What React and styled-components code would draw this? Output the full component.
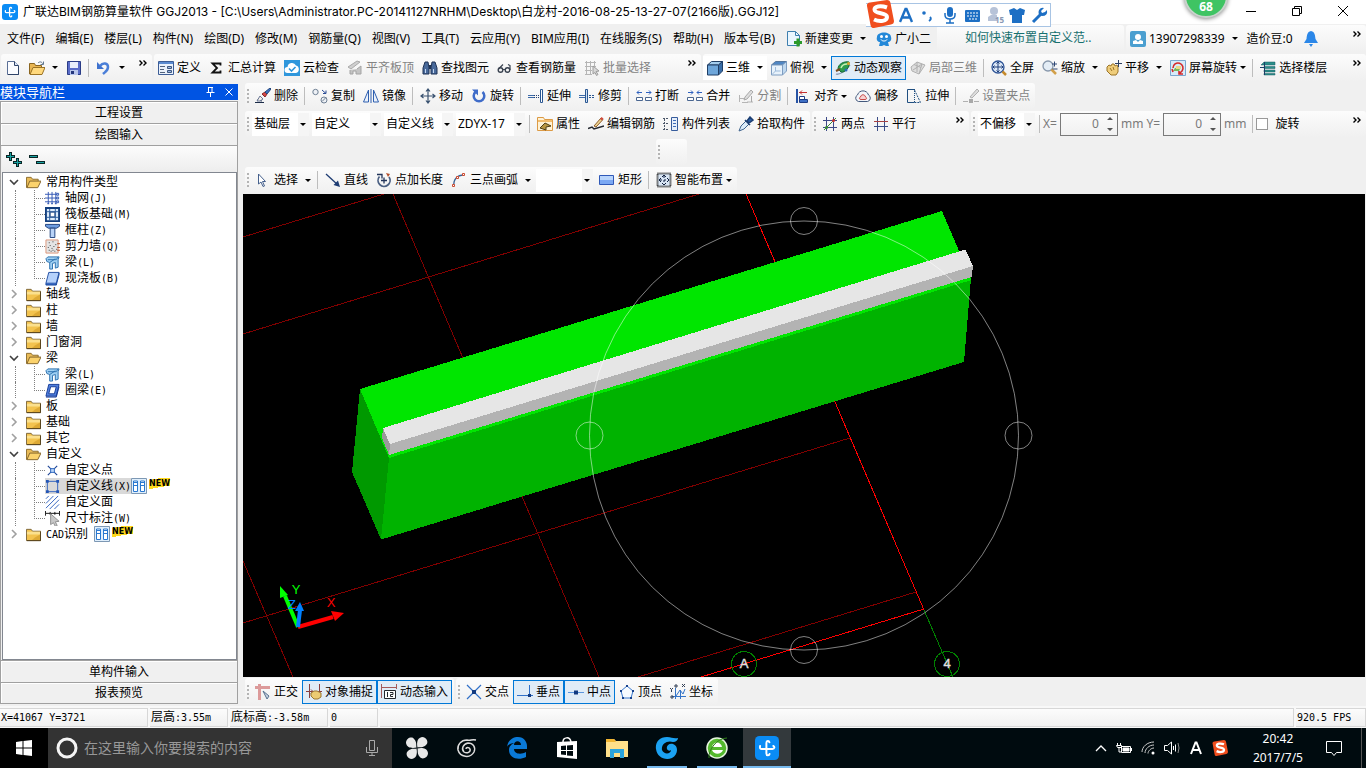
import React, { useState } from "react";
import styled, { createGlobalStyle } from "styled-components";

const GlobalStyle = createGlobalStyle`
  * {
    box-sizing: border-box;
  }

  body {
    margin: 0;
    background: #f0f0f0;
    color: #000;
    font-family: "Noto Sans", "Noto Sans CJK SC", sans-serif;
    font-size: 12px;
    line-height: 16px;
    overflow: hidden;
  }

  button, input, select {
    font: inherit;
    color: inherit;
  }
`;

// ---------- icons ----------

const IconSvg = styled.svg`
  flex: none;
`;

const Svg = ({ size = 16, children }) => (
  <IconSvg width={size} height={size} viewBox="0 0 16 16" fill="none" aria-hidden="true">
    {children}
  </IconSvg>
);

const Logo = ({ size }) => (
  <Svg size={size}>
    <rect width="16" height="16" rx="3" fill="#0a8cf5" />
    <path
      d="M9.6 4.2C9.3 3 7.6 3 7.6 4.6v7c0 1.6 1.8 1.6 2.1.4M3.4 6.6C3 9 4 8.6 5 8.6h6.6c1.6 0 1.6-1.6.6-2"
      stroke="#fff"
      strokeWidth="1.3"
      strokeLinecap="round"
    />
  </Svg>
);

const icons = {
  newDoc: (
    <>
      <path d="M2.5 1.5h7l4 4v9h-11z" fill="#fbfcff" stroke="#5a6f96" />
      <path d="M9.5 1.5v4h4" fill="#dce6f7" stroke="#2f4368" />
      <path d="M13.5 6v8.5H3" stroke="#2f4368" />
    </>
  ),
  open: (
    <>
      <path d="M.5 14V3.5h5l1 2h6v2" fill="#e8b552" stroke="#8a6520" />
      <path d="M1 14.5l3-7h12l-3 7z" fill="#ffd97e" stroke="#9a7224" />
      <path d="M9 3c2-2 4-1 5 1M14.5 1.5v3h-3" stroke="#62788f" />
    </>
  ),
  save: (
    <>
      <path d="M1.5 1.5h13v13h-13z" fill="#5a6cc8" stroke="#2a3c86" />
      <path d="M4 2h8v6H4z" fill="#e9eefb" />
      <path d="M4 10h8v5H4z" fill="#b9c6ec" />
      <path d="M5 11h3v3H5z" fill="#24357c" />
    </>
  ),
  undo: (
    <>
      <path d="M1 2v7h7z" fill="#3f73cf" />
      <path d="M4 6c3-4 8-3 8 1s-3 5-5 7" stroke="#4b7fd8" strokeWidth="2.5" />
    </>
  ),
  define: (
    <>
      <path d="M.5 1.5h15v13H.5z" fill="#eaf1fb" stroke="#3c5d96" />
      <path d="M1 2h14v2H1z" fill="#5b8bd0" />
      <path d="M2 6.5h5M2 9.5h4M2 12.5h5" stroke="#51627c" />
      <path d="M9.5 6.5h4v2h-4zM9.5 10.5h4v2h-4z" fill="#9bb7e2" stroke="#3d567e" />
    </>
  ),
  sigma: <path d="M11.5 5.5v-2h-8L8 8l-4.5 4.5h8v-2" stroke="#111" strokeWidth="1.8" />,
  cloud: (
    <>
      <path d="M0 0h16v16H0z" fill="#2f97dc" />
      <path d="M3.5 13a3 3 0 010-6A4.5 4.5 0 0112 5.5 3.9 3.9 0 0112 13z" fill="#fff" />
      <path d="M5 8.5L7.5 11l4-4" stroke="#2f97dc" strokeWidth="1.6" />
    </>
  ),
  flatten: (
    <>
      <path d="M1 7l9-6 3 1-9 7z" fill="#cfcfcf" stroke="#aaa" />
      <path d="M3 10v4h3v-3h3v3h5V6l-4 3" fill="#c4c4c4" stroke="#a4a4a4" />
    </>
  ),
  find: (
    <>
      <path d="M3 2h3l1 6v6H1V8zM10 2h3l2 6v6H9V8z" fill="#48699a" stroke="#1e3254" />
      <path d="M7 5h2v4H7z" fill="#1e3254" />
      <path d="M3.5 9v4M11.5 9v4" stroke="#c4d6ef" />
    </>
  ),
  glasses: (
    <>
      <circle cx="3.5" cy="10" r="2.3" stroke="#3a4350" strokeWidth="1.4" />
      <circle cx="10.5" cy="10" r="2.3" stroke="#3a4350" strokeWidth="1.4" />
      <path d="M6 9.5h2M1.5 9L6 4.5M13 10V5.5l-2-1" stroke="#3a4350" strokeWidth="1.2" />
    </>
  ),
  batch: (
    <>
      <path
        d="M1 2.5h11M1 6.5h11M1 10.5h7M1 14.5h7M2.5 1v14M6.5 1v14M10.5 1v6"
        stroke="#b5b5b5"
      />
      <path d="M9 6l6 5-3 .5 2 3-1.5 1-1.5-3-2 1.5z" fill="#d8d8d8" stroke="#9b9b9b" />
    </>
  ),
  cube: (
    <>
      <path d="M.5 5l4-3.5h11L11.5 5z" fill="#a4cdee" stroke="#203f66" />
      <path d="M.5 5h11v10H.5z" fill="#6ea6da" stroke="#203f66" />
      <path d="M11.5 5l4-3.5V11l-4 4z" fill="#3a6ea8" stroke="#203f66" />
    </>
  ),
  topView: (
    <>
      <path d="M.5 5l4-3.5h11L11.5 5z" fill="#4f86c4" stroke="#56779d" />
      <path d="M.5 5h11v10H.5z" fill="#e8f2fb" stroke="#7d9cc0" />
      <path d="M11.5 5l4-3.5V11l-4 4z" fill="#bfd8ef" stroke="#7d9cc0" />
      <path d="M4.5 7v4h5M4.5 11L1 14.5" stroke="#9dbbdb" />
    </>
  ),
  orbit: (
    <>
      <path d="M1 14c2 1 10-2 14-9" stroke="#8a9ab5" strokeWidth="1.3" />
      <path d="M3 9c0-5 6-8 11-7 1 5-4 11-8 10z" fill="#2f9d4e" stroke="#136b33" />
      <path d="M6 8c1-3 4-4 6-4" stroke="#c9f0b5" strokeWidth="1.5" />
      <path d="M1 11l4-2" stroke="#7a4a1f" strokeWidth="2" />
      <circle cx="11" cy="10" r="1.5" fill="#2b6bb4" />
      <circle cx="13.5" cy="3.5" r="1.5" fill="#e2a52b" />
    </>
  ),
  local3d: (
    <>
      <path d="M1 7l6-5 8 3-6 9-7-3z" fill="#dedede" stroke="#b0b0b0" />
      <path d="M4 4.5l7 3M7 2v10M3 10l9-6M12 4L9 14" stroke="#b0b0b0" />
    </>
  ),
  fit: (
    <>
      <circle cx="7" cy="7" r="6" fill="#dfeaf8" stroke="#2f5597" strokeWidth="1.3" />
      <path
        d="M7 2v10M2 7h10M5.5 3.5L7 2l1.5 1.5M5.5 10.5L7 12l1.5-1.5M3.5 5.5L2 7l1.5 1.5M10.5 5.5L12 7l-1.5 1.5"
        stroke="#1f3f7a"
      />
      <path d="M11.5 11.5L15 15" stroke="#c58a2c" strokeWidth="2.5" />
    </>
  ),
  zoom: (
    <>
      <circle cx="6" cy="6" r="5" fill="#e4edf6" stroke="#8898ac" strokeWidth="1.3" />
      <path d="M9.5 9.5L14 14" stroke="#d2a04a" strokeWidth="2.5" />
      <path d="M10 4h5M12.5 1.5v5M10.5 9h5" stroke="#2e4775" />
    </>
  ),
  pan: (
    <>
      <path
        d="M1 7l2-2 2 1 1-2h2l1 2 2-1 1 2v5l-2 3H5l-4-4z"
        fill="#efcd7b"
        stroke="#9b7428"
      />
      <path d="M4 8l2 3M7 7l1 3" stroke="#9b7428" />
      <path d="M12.5 0v7M9 3.5h7" stroke="#2d3f63" />
    </>
  ),
  rotateView: (
    <>
      <path d="M.5.5h15v15H.5z" fill="#d7ebf9" stroke="#7aa7cf" />
      <path d="M5 8l6-1-2 4H3z" fill="#79b85a" />
      <path d="M6 6h5v3H6z" fill="#e9d88a" />
      <path d="M3 8a5 5 0 119 3l-3 3M9 11v3h4M3 12l-1-3" stroke="#d62a2a" strokeWidth="1.6" />
    </>
  ),
  floors: (
    <>
      <path
        d="M1 5l3-3h11v3zM4 6.5h11v2H4zM4 10h11v2H4zM4 13.5h11V15H4z"
        fill="#2a8f8a"
        stroke="#1c5c66"
        strokeWidth=".5"
      />
      <path d="M0 7.5h4M4.5 2v13" stroke="#1c3e66" />
    </>
  ),
  erase: (
    <>
      <path d="M0 14.5h9M2 12l5 1" stroke="#1c2c48" />
      <path d="M5 8l3 3-3 2H2z" fill="#f4f0ea" stroke="#6b7896" />
      <path d="M7 6l3 3 2-3-2-2z" fill="#d34848" stroke="#8a2727" />
      <path d="M10 4l2 2 4-5-1-1z" fill="#3d73c4" stroke="#24467c" />
    </>
  ),
  copy: (
    <>
      <circle cx="3.5" cy="4" r="2.7" fill="#eef1f6" stroke="#6f8094" />
      <circle cx="12" cy="12" r="3" fill="#eef1f6" stroke="#6f8094" />
      <path d="M10 13.5l4-4" stroke="#6f8094" />
      <path d="M10 2l4 3.5M14 2.5v3h-3" stroke="#2b4c96" />
    </>
  ),
  mirror: (
    <>
      <path d="M5.5 2v12h-5zM10.5 2v12h5z" fill="#eaf1fb" stroke="#3060b0" />
      <path d="M8 1v14" stroke="#3060b0" />
    </>
  ),
  move: (
    <path
      d="M8 1v14M1 8h14M6 3.5L8 1l2 2.5M6 12.5L8 15l2-2.5M3.5 6L1 8l2.5 2M12.5 6L15 8l-2.5 2"
      stroke="#3a5270"
      strokeWidth="1.2"
    />
  ),
  rotate: (
    <>
      <path d="M4.5 4a5.3 5.3 0 107 0" stroke="#3f6cc9" strokeWidth="2.5" />
      <path d="M1 1.5h6v6z" fill="#3f6cc9" />
    </>
  ),
  extend: (
    <>
      <path d="M0 7.5h6M0 9.5h6" stroke="#3c6aa8" />
      <path d="M6 7.5h5M6 9.5h5" stroke="#223f70" strokeDasharray="1 1" />
      <path d="M12.5 1.5h2v13h-2z" fill="#fff" stroke="#2a5792" />
    </>
  ),
  trim: (
    <>
      <path d="M0 7.5h6M0 9.5h6" stroke="#3c6aa8" />
      <path d="M6.5 1.5h2v13h-2z" fill="#cfe0f4" stroke="#2a5792" />
      <path d="M10 7.5h5M10 9.5h5" stroke="#2a5792" strokeDasharray="2 1" />
    </>
  ),
  breakIt: (
    <>
      <path d="M.5 9.5h6v3h-6zM9.5 9.5h6v3h-6z" fill="#fff" stroke="#4a6690" />
      <path d="M1 4.5h5M10 4.5h5M3 2.5l-2 2 2 2M13 2.5l2 2-2 2" stroke="#2f62c0" />
    </>
  ),
  merge: (
    <>
      <path d="M.5 9.5h6v3h-6zM9.5 9.5h6v3h-6z" fill="#fff" stroke="#4a6690" />
      <path d="M1 4.5h5M10 4.5h5M4 2.5l2 2-2 2M12 2.5l-2 2 2 2" stroke="#2f62c0" />
    </>
  ),
  split: (
    <>
      <path d="M1.5 7v7M1 10.5h8M9 14h6M4 14.5h6" stroke="#b5b5b5" />
      <path d="M6 12l1-3 6-7 2 2-6 7zM13.5 8v6" fill="#ddd" stroke="#a9a9a9" />
    </>
  ),
  align: (
    <>
      <path d="M2 1v14" stroke="#2753a4" strokeWidth="2" />
      <path d="M4 4.5h8M7 2.5l-2 2 2 2" stroke="#c63131" />
      <path d="M4.5 8.5h5v3h-5zM4.5 11.5h8v3h-8z" fill="#fff" stroke="#1e3d85" />
      <path d="M5 12h7v2H5z" fill="#3f6fc4" />
    </>
  ),
  offset: (
    <>
      <path
        d="M3.5 13.5a3.5 3.5 0 01-1-6.5C4 1.5 12 1.5 13.5 7a3.5 3.5 0 01-1 6.5z"
        fill="#f3f5f9"
        stroke="#44597c"
      />
      <path
        d="M6 11.5c-2 0-2-2-.5-2.5.5-3 4.5-3 5 0 1.5.5 1.5 2.5-.5 2.5z"
        fill="#f6d2d2"
        stroke="#c64848"
      />
    </>
  ),
  stretch: (
    <>
      <path d="M9 1.5H1.5v13h7" stroke="#204f80" />
      <path d="M8.5 2l6 12.5h-6" stroke="#204f80" strokeDasharray="2 1" />
      <path d="M8.5 3v11" stroke="#204f80" strokeDasharray="1 1" />
    </>
  ),
  grip: (
    <>
      <path d="M0 13.5h5M11 13.5h5" stroke="#b0b0b0" />
      <path d="M6 11h4v4H6z" fill="#a9a9a9" />
      <path d="M7 9l7-8 2 2-7 7z" fill="#ddd" stroke="#b0b0b0" />
    </>
  ),
  props: (
    <>
      <path d="M.5 1.5h6l1 2h8v11H.5z" fill="#fff2d5" stroke="#dc9a45" />
      <path d="M1 4h14v2H1z" fill="#f2bd6e" />
      <path d="M3 12l5-5 6 3-5 1v3z" fill="#b79541" stroke="#4c3d16" />
    </>
  ),
  editBar: (
    <>
      <path d="M0 12.5L4 11l2 2 10-3" stroke="#23272e" strokeWidth="1.5" />
      <path d="M6 10l7-8 2 1.5L8 11z" fill="#efd592" stroke="#8b5b2a" />
      <path d="M12 3l2 1.5 1.5-2-2-1.5z" fill="#d14c3f" />
    </>
  ),
  list: (
    <>
      <path d="M0 2.5h6M0 7.5h6M0 13.5h6M1.5 3v11" stroke="#4b5668" strokeDasharray="2 1" />
      <path d="M8.5 1.5h6v13h-6z" fill="#e7effa" stroke="#365c9c" />
      <path d="M10 4.5h3M10 7.5h3M10 10.5h3" stroke="#3d6bb7" />
    </>
  ),
  picker: (
    <>
      <path d="M1 15l2-5 5-5 3 3-5 5z" fill="#dcecf9" stroke="#41658e" />
      <path d="M7 4l5 5M9 5l3-4 3 3-4 3z" fill="#2c5fa5" stroke="#1c3e72" strokeWidth="1.5" />
    </>
  ),
  twoPoint: (
    <>
      <path d="M4.5 1v14M11.5 1v14M1 4.5h14M1 11.5h14" stroke="#3d4a88" />
      <path d="M2 14L14 2" stroke="#3a8a3a" />
      <circle cx="4.5" cy="11.5" r="1.5" fill="#3a8a3a" />
      <circle cx="11.5" cy="4.5" r="1.5" fill="#c33" />
    </>
  ),
  parallel: (
    <>
      <path d="M4.5 1v14M11.5 1v14" stroke="#3b4c86" />
      <path d="M1 5.5h14" stroke="#a74141" />
      <path d="M1 10.5h14" stroke="#3b4c86" />
    </>
  ),
  pointer: (
    <path d="M3.5 2v10L6 10l2 4.5 1.5-.5-2-4.5h3z" fill="#fff" stroke="#46618d" />
  ),
  line: (
    <>
      <path d="M1 2l12 11" stroke="#1e3c73" strokeWidth="1.3" />
      <path d="M15 15l-6.5-2L13 8.5z" fill="#1e3c73" />
    </>
  ),
  pointLen: (
    <>
      <path d="M3.5 4.5A6 6 0 1013 5" stroke="#4a5f82" strokeWidth="1.8" />
      <path d="M1 2.5h5v4M8 5.5v6M5 8.5h6" stroke="#22345a" strokeWidth="1.3" />
      <path d="M10 1l4 1-2 3z" fill="#b5502c" />
    </>
  ),
  arc: (
    <>
      <path d="M3 14C2 8 6 3 13 3" stroke="#3b6394" strokeWidth="1.3" />
      <path
        d="M1.5 12.5h2v2h-2zM5.5 4.5h2v2h-2zM11.5 1.5h2v2h-2z"
        fill="#fff"
        stroke="#cc4a30"
      />
    </>
  ),
  rect: (
    <>
      <path d="M.5 3.5h14v9H.5z" fill="#b9d5fc" stroke="#3059b8" />
      <path d="M1 8h13v4H1z" fill="#7ba8f3" />
    </>
  ),
  smart: (
    <>
      <path
        d="M1.5 1.5h13v13h-13z"
        fill="#d9e6f5"
        stroke="#111"
        strokeWidth="2"
        strokeDasharray="1 1"
      />
      <path d="M8 4v8M4 8h8" stroke="#102040" strokeDasharray="2 2" />
      <path d="M6 5l2-2 2 2M6 11l2 2 2-2M5 6L3 8l2 2M11 6l2 2-2 2" stroke="#102040" />
    </>
  ),
  ortho: (
    <>
      <path d="M0 2h15v3H0zM3 0h3v16H3z" fill="#dc9a9a" />
      <path d="M8 7l6 5-2 3z" fill="#c9d4e2" stroke="#56708f" />
    </>
  ),
  snap: (
    <>
      <path d="M3.5 0v14M13.5 0v7" stroke="#8a4040" />
      <path d="M0 7.5h7M5 5.5l2 2-2 2M16 7.5h-4" stroke="#8a4040" />
      <path d="M5 9l3-2h3l4 2v4l-3 2H8l-3-3z" fill="#eccb72" stroke="#9b7630" />
    </>
  ),
  dynInput: (
    <>
      <path d="M.5 0v14M15.5 0v5M0 3.5h15" stroke="#a45b5b" />
      <path d="M3.5 6.5h11v8h-11z" fill="#fff" stroke="#23272e" />
      <path d="M6.5 8v5M9 8.5h3v2H9.5v2H12" stroke="#23272e" />
    </>
  ),
  cross: (
    <>
      <path d="M1 1l14 14M15 1L1 15" stroke="#3070c8" strokeWidth="1.2" />
      <path d="M6 6h4v4H6z" fill="#123a80" />
    </>
  ),
  perp: (
    <>
      <path d="M0 11.5h16M12.5 1v11" stroke="#3070c8" />
      <path d="M11 10h3v3h-3z" fill="#123a80" />
    </>
  ),
  mid: (
    <>
      <path d="M0 8.5h16" stroke="#5b95dc" />
      <path d="M6 6.5h4v4H6z" fill="#123a80" />
    </>
  ),
  vertex: (
    <>
      <path d="M8 2l6 5-2 7H4L2 7z" stroke="#3a7ad0" fill="#f7fbff" />
      <path
        d="M7 1h2v2H7zM1 6h2v2H1zM13 6h2v2h-2zM3 13h2v2H3zM11 13h2v2h-2z"
        fill="#17428d"
      />
    </>
  ),
  coord: (
    <>
      <path d="M5.5 4v11M2 12.5h14M6 12l4-6 3 4 2-5M10.5 6v9" stroke="#3474c8" />
      <path
        d="M0 4l1.5 1.5L3 4M1.5 5.5V8M5 1h2v2H5zM12 0l3 3M15 0l-3 3M1 12h2v2H1z"
        stroke="#333f55"
      />
    </>
  ),
  change: (
    <>
      <path d="M1.5.5h8l4 4v10h-12z" fill="#eaf6ff" stroke="#3e7fae" />
      <path d="M9.5.5v4h4" stroke="#3e7fae" />
      <path d="M8 11.5h8M12 7.500v8" stroke="#2b9a2b" strokeWidth="3" />
    </>
  ),
  mascot: (
    <>
      <path
        d="M1 6c0-6 14-6 14 0 1 3-1 5-3 5l1 4h-3l-2-1-2 1H3l1-4C2 11 0 9 1 6z"
        fill="#2388d8"
      />
      <circle cx="5.5" cy="5.5" r="1.5" fill="#fff" />
      <circle cx="10.5" cy="5.5" r="1.5" fill="#fff" />
      <path d="M5 8.5c1 2 5 2 6 0" stroke="#fff" />
    </>
  ),
  user: (
    <>
      <rect width="16" height="16" rx="2" fill="#4b9fd0" />
      <circle cx="8" cy="6" r="3" fill="#fff" />
      <path d="M3 13v-3l3-1 2 2 2-2 3 1v3z" fill="#fff" />
    </>
  ),
  bell: (
    <>
      <path d="M8 0c4 1 4 4 4.5 8l2.5 4H1l2.500-4C4 4 4 1 8 0z" fill="#2b87e8" />
      <path d="M6 13h4l-2 3z" fill="#2b87e8" />
    </>
  ),
  folder: (
    <>
      <path d="M.5 14.5v-12h5l1.5 2h8.5v10z" fill="#f3c34f" stroke="#7b6437" />
      <path d="M1 5h14v3H1z" fill="#fbe08e" />
      <path d="M10 11l5-3v6H6z" fill="#dda935" />
      <path d="M15.5 5v9.5H1" stroke="#54401a" />
    </>
  ),
  folderOpen: (
    <>
      <path d="M.5 13.5v-11h5l1.5 2h6v2" fill="#e9bb58" stroke="#8a6b2c" />
      <path d="M1 13.5l3-7h12l-3.5 7z" fill="#fbd26c" stroke="#80622a" />
    </>
  ),
  grid: (
    <>
      <path d="M3.5 1v13M7.5 1v13M11.5 1v13M0 3.5h13M0 7.5h13M0 11.5h13" stroke="#3156b4" />
      <path
        d="M12.5 2.5h2v2h-2zM12.5 6.5h2v2h-2zM12.5 10.5h2v2h-2zM2.5 13.5h2M6.5 13.5h2M10.5 13.5h2"
        stroke="#3156b4"
      />
    </>
  ),
  raft: (
    <>
      <path d="M1 1h14v14H1z" fill="#dcebfb" stroke="#123e7e" strokeWidth="2" />
      <path d="M5 2v12M11 2v12M2 5h12M2 11h12" stroke="#2a5d9e" />
      <path d="M5.5 5.5h5v5h-5z" fill="#fff" stroke="#123e7e" />
    </>
  ),
  column: (
    <>
      <path d="M.5 1.5h15v2l-3 2h-9l-3-2z" fill="#6d9ce0" stroke="#1d3f7c" />
      <path d="M5.5 5.5h5v10h-5z" fill="#b9d3f7" stroke="#1d3f7c" />
    </>
  ),
  wall: (
    <>
      <path d="M1 1h13v14H1z" fill="#e4e4e4" stroke="#dc9478" />
      <path
        d="M4 4h1M8 3h1M11 6h1M5 7h1M9 8h1M3 9h1M7 10h1M4 12h1M8 12h1M12 11h1M6 13h1M10 13h1"
        stroke="#333"
      />
      <path d="M13 5h3M13 9h3M13 12h3" stroke="#b0471f" />
    </>
  ),
  beam: (
    <>
      <path d="M1 4l2-2h12l-1 3v8l-3 1V8L8 9v6H5V8L2 7z" fill="#9fd0f3" stroke="#2a6fae" />
      <path d="M3 5h9M12 5l2-3M5 8l6-4" stroke="#2a6fae" />
    </>
  ),
  slab: (
    <>
      <path d="M4 1.5h11L12 13H1z" fill="#b5d1fb" stroke="#1f4ca0" />
      <path d="M1 13v2h11v-2M12 15l3-11V2" fill="#2e60be" stroke="#1f4ca0" />
    </>
  ),
  ring: (
    <>
      <path
        d="M4 1.5h11L12 14H1zM6 4L4 11.5h6L12 4z"
        fill="#4f7fdc"
        fillRule="evenodd"
        stroke="#143a96"
      />
      <path d="M1 15h11l3-11" stroke="#143a96" />
    </>
  ),
  customPoint: (
    <>
      <path d="M3 3l10 10M13 3L3 13" stroke="#1e4596" strokeWidth="1.2" />
      <path d="M6 6h4v4H6z" fill="#bcd6f8" stroke="#2e68c0" />
    </>
  ),
  customLine: (
    <>
      <path d="M2.5 2.5h11v11h-11z" stroke="#2e60be" />
      <path d="M1 1h3v3H1zM12 1h3v3h-3zM1 12h3v3H1zM12 12h3v3h-3z" fill="#2456b6" />
    </>
  ),
  customFace: (
    <path d="M1 4l3-3M1 9l8-8M1 14L14 1M5 15L15 5M10 15l5-5" stroke="#2e60be" />
  ),
  dimension: (
    <>
      <path d="M.5 0v5M15.5 0v5M1 2.5h14M5.5 1v3M10.5 1v3" stroke="#111" />
      <path d="M6 3l9 8-4 .5 2 4-2 1-2-4-3 2z" fill="#c8c8c8" stroke="#8e8e8e" />
    </>
  ),
  book: (
    <>
      <path d="M.5.5h15v15H.5z" fill="#e0effc" stroke="#7d98b4" />
      <path d="M2.5 3v10.5h4V3zM9.5 3v10.5h4V3z" fill="#fff" stroke="#2a78d0" />
      <path d="M3 4.5h3M10 4.5h3M3 7.5h3M10 7.5h3" stroke="#2a78d0" />
    </>
  ),
  pin: <path d="M5.5 3v6M5 3.5h5M3.5 8.5h8M7.5 9v4M9 3v6" stroke="#fff" />,
};

const Icon = ({ name, size }) => <Svg size={size}>{icons[name]}</Svg>;

// ---------- shared pieces ----------

const Window = styled.div`
  display: flex;
  flex-direction: column;
  height: 100vh;
`;

const TitleBar = styled.header`
  display: flex;
  align-items: center;
  gap: 5px;
  height: 24px;
  padding-left: 2px;
  background: #fff;
  flex: none;

  h1 {
    margin: 0;
    font-family: Inter, "Noto Sans CJK SC", sans-serif;
    font-size: 12px;
    font-weight: 400;
    white-space: nowrap;
  }
`;

const WindowButtons = styled.div`
  display: flex;
  margin-left: auto;

  button {
    width: 46px;
    height: 22px;
    padding: 0;
    border: none;
    background: none;
  }
`;

const Band = styled.div`
  display: grid;
  grid-template-columns: ${(props) => props.$columns || "1fr"};
  gap: 2px;
  height: ${(props) => (props.$tall ? 29 : 28)}px;
  padding: 1px 0 1px ${(props) => props.$indent || 0}px;
  flex: none;
`;

const Group = styled.div`
  display: flex;
  align-items: center;
  min-width: 0;
  justify-self: ${(props) => (props.$fit ? "start" : "stretch")};
  padding-right: 1px;
  border-radius: 3px;
  background: linear-gradient(#fcfcfc, #f0f0f0);
`;

const GripDots = styled.span`
  width: 6px;
  height: 14px;
  flex: none;
  background: repeating-linear-gradient(#b4b4b4 0 2px, transparent 2px 4px) 2px 0 /
    2px 14px no-repeat;
`;

const Separator = styled.span`
  width: 6px;
  height: 18px;
  flex: none;
  background: linear-gradient(#bdbdbd, #bdbdbd) 2px 0 / 1px 100% no-repeat;
`;

const ToolButton = styled.button`
  display: flex;
  align-items: center;
  gap: 3px;
  height: 24px;
  padding: 0 3px;
  border: 1px solid ${(props) => (props.$active ? "#0078d7" : "transparent")};
  background: ${(props) =>
    props.$active ? "#e0ecf7" : props.$white ? "#fff" : "none"};
  white-space: nowrap;
  flex: none;

  &:disabled {
    color: #838383;
  }
`;

const Caret = styled.span`
  margin-left: ${(props) => (props.$split ? 4 : 0)}px;
  border: solid transparent;
  border-width: 3px 3px 0;
  border-top-color: #000;
  width: 5px;
  flex: none;
`;

const Tool = ({ icon, label, caret, split, ...rest }) => (
  <ToolButton type="button" aria-label={label || icon} {...rest}>
    <Icon name={icon} />
    {label}
    {(caret || split) && <Caret $split={split} />}
  </ToolButton>
);

const OverflowButton = styled.button`
  align-self: flex-start;
  width: 16px;
  height: 14px;
  margin-left: auto;
  padding: 0;
  border: none;
  background: none;
  flex: none;
`;

const Overflow = () => (
  <OverflowButton type="button" aria-label="更多">
    <svg width="8" height="6" viewBox="0 0 8 6" fill="none">
      <path d="M.5.5L3 3 .5 5.5M4.5.5L7 3 4.5 5.5" stroke="#000" strokeWidth="1.4" />
    </svg>
  </OverflowButton>
);

const ComboBox = styled.div`
  display: flex;
  align-items: center;
  width: ${(props) => (props.$wide ? 69 : 57)}px;
  height: 23px;
  margin: 0 2px 0 1px;
  background: linear-gradient(#f5f5f5, #f5f5f5) right / 11px 100% no-repeat #fff;
  flex: none;

  select {
    flex: 1;
    min-width: 0;
    padding: 0 0 0 2px;
    border: none;
    background: none;
    appearance: none;
    outline: none;
  }

  ${Caret} {
    margin-right: 3px;
  }
`;

const Combo = ({ label, value, wide }) => (
  <ComboBox $wide={wide}>
    <select aria-label={label} defaultValue={value}>
      <option>{value}</option>
    </select>
    <Caret />
  </ComboBox>
);

// ---------- menu ----------

const MenuBar = styled.nav`
  display: flex;
  align-items: center;
  gap: 11px;
  padding-left: 7px;

  > button {
    padding: 0;
    border: none;
    background: none;
    white-space: nowrap;
  }
`;

const MenuTools = styled.div`
  display: flex;
  gap: 2px;
  margin-left: -4px;
`;

const Tip = styled.a`
  padding: 5px 0 0 28px;
  border-radius: 3px;
  background: linear-gradient(#fcfcfc, #f0f0f0);
  color: #17706f;
  text-decoration: none;
  white-space: nowrap;
`;

const Bean = styled.span`
  margin: 0 6px 0 5px;
`;

const menus = [
  "文件(F)",
  "编辑(E)",
  "楼层(L)",
  "构件(N)",
  "绘图(D)",
  "修改(M)",
  "钢筋量(Q)",
  "视图(V)",
  "工具(T)",
  "云应用(Y)",
  "BIM应用(I)",
  "在线服务(S)",
  "帮助(H)",
  "版本号(B)",
];

const Menu = () => (
  <Band $tall $columns="935px 187px 1fr">
    <MenuBar>
      {menus.map((menu) => (
        <button type="button" key={menu}>
          {menu}
        </button>
      ))}
      <MenuTools>
        <Tool icon="change" label="新建变更" split />
        <Tool icon="mascot" label="广小二" />
      </MenuTools>
    </MenuBar>
    <Tip href="#tip">如何快速布置自定义范..</Tip>
    <Group>
      <Tool icon="user" label="13907298339" split />
      <Bean>造价豆:0</Bean>
      <Tool icon="bell" />
      <Overflow />
    </Group>
  </Band>
);

// ---------- floating input method bar and speed ball ----------

const ImeBar = styled.div`
  position: absolute;
  top: 3px;
  left: 866px;
  display: flex;
  align-items: center;
  justify-content: flex-end;
  width: 185px;
  height: 24px;
  padding-right: 1px;
  border: 1px solid #a8c4e4;
  border-left: none;
  background: #fff;
`;

const ImeLogo = styled.span`
  position: absolute;
  left: 0;
  top: -4px;
`;

const SogouLogo = ({ size }) => (
  <IconSvg width={size} height={size} viewBox="0 0 28 28" fill="none">
    <path
      d="M1 6Q.5 3 4 2.5L21 0q3 0 3.5 3L28 21q0 3-3 3.5L8 28q-3 .5-3.5-3z"
      fill="#f04e1e"
    />
    <path
      d="M21 7.5C14 5 8.5 6.5 8.5 9.5c0 5 12.5 2.5 12.5 7.5 0 4-7 5.5-13 2.500"
      stroke="#fff"
      strokeWidth="4"
    />
  </IconSvg>
);

const SpeedBall = styled.div`
  position: absolute;
  top: -26px;
  left: 1184px;
  width: 44px;
  height: 44px;
  padding-top: 23px;
  border: 2px solid #c9d3cc;
  border-radius: 50%;
  background: #3fc463;
  box-shadow: 0 1px 4px #888;
  color: #fff;
  font-weight: 700;
  text-align: center;
`;

const Ime = () => (
  <ImeBar>
    <ImeLogo>
      <SogouLogo size={28} />
    </ImeLogo>
    <svg width="150" height="20" viewBox="0 0 150 20" fill="none">
      <path d="M1 17L6.5 4h1L13 17M3.5 12.5h7" stroke="#1d6fc4" strokeWidth="2.4" />
      <circle cx="25" cy="8" r="1.8" fill="#1d6fc4" />
      <path d="M31 12q2 2-1 4" stroke="#1d6fc4" strokeWidth="2" />
      <rect x="48" y="2" width="6" height="10" rx="3" fill="#1d6fc4" />
      <path
        d="M46 8v2q0 4 5 4t5-4V8M51 14v4M47 18h8"
        stroke="#1d6fc4"
        strokeWidth="1.5"
      />
      <rect x="66" y="5" width="15" height="12" rx="1" fill="#1d6fc4" />
      <path
        d="M68 8h12M68 11h12M70 14h8"
        stroke="#fff"
        strokeWidth="1.2"
        strokeDasharray="2 1"
      />
      <circle cx="95" cy="6" r="4" fill="#b7c3d8" />
      <path d="M89 16v-4l3-2h6v6z" fill="#b7c3d8" />
      <text x="96" y="18" fontSize="8" fontWeight="700" fill="#8797b3">
        15
      </text>
      <path d="M110 5l5-2 3 2 3-2 5 2-1 5h-2v8h-10v-8h-2z" fill="#1d6fc4" />
      <path d="M134 17l8-8" stroke="#1d6fc4" strokeWidth="3" />
      <path d="M145 3l-3 3 1 2 3-1 2-2q1 6-5 6-5-1-3-6 2-3 5-2z" fill="#1d6fc4" />
    </svg>
  </ImeBar>
);

// ---------- toolbars ----------

const MainTools = () => (
  <Band $tall $columns="151px 547px 1fr" $indent={1}>
    <Group>
      <Tool icon="newDoc" />
      <Tool icon="open" split />
      <Tool icon="save" />
      <Separator />
      <Tool icon="undo" split />
      <Overflow />
    </Group>
    <Group>
      <Tool icon="define" label="定义" />
      <Tool icon="sigma" label="汇总计算" />
      <Tool icon="cloud" label="云检查" />
      <Tool icon="flatten" label="平齐板顶" disabled />
      <Tool icon="find" label="查找图元" />
      <Tool icon="glasses" label="查看钢筋量" />
      <Tool icon="batch" label="批量选择" disabled />
      <Overflow />
    </Group>
    <Group>
      <Tool icon="cube" label="三维" split $white />
      <Tool icon="topView" label="俯视" split />
      <Tool icon="orbit" label="动态观察" $active />
      <Tool icon="local3d" label="局部三维" disabled />
      <Separator />
      <Tool icon="fit" label="全屏" />
      <Tool icon="zoom" label="缩放" split />
      <Tool icon="pan" label="平移" split />
      <Tool icon="rotateView" label="屏幕旋转" caret />
      <Separator />
      <Tool icon="floors" label="选择楼层" />
      <Overflow />
    </Group>
  </Band>
);

const EditTools = () => (
  <Band $indent={2}>
    <Group $fit>
      <GripDots />
      <Tool icon="erase" label="删除" />
      <Separator />
      <Tool icon="copy" label="复制" />
      <Tool icon="mirror" label="镜像" />
      <Separator />
      <Tool icon="move" label="移动" />
      <Tool icon="rotate" label="旋转" />
      <Separator />
      <Tool icon="extend" label="延伸" />
      <Tool icon="trim" label="修剪" />
      <Separator />
      <Tool icon="breakIt" label="打断" />
      <Tool icon="merge" label="合并" />
      <Tool icon="split" label="分割" disabled />
      <Separator />
      <Tool icon="align" label="对齐" caret />
      <Tool icon="offset" label="偏移" />
      <Tool icon="stretch" label="拉伸" />
      <Separator />
      <Tool icon="grip" label="设置夹点" disabled />
    </Group>
  </Band>
);

const OffsetLabel = styled.label`
  display: flex;
  align-items: center;
  gap: 3px;
  margin-right: 3px;
  color: #7a7a7a;
`;

const SpinBox = styled.span`
  display: flex;
  align-items: center;
  width: 58px;
  height: 23px;
  padding-right: 4px;
  border: 1px solid #7a7a7a;

  input {
    flex: 1;
    min-width: 0;
    padding: 0 8px 0 0;
    border: none;
    background: none;
    text-align: right;
    outline: none;
  }
`;

const Offset = ({ axis }) => (
  <OffsetLabel>
    {axis}=
    <SpinBox>
      <input defaultValue="0" disabled />
      <svg width="6" height="16" viewBox="0 0 6 16" fill="#555">
        <path d="M0 4l3-3 3 3zM0 12l3 3 3-3z" />
      </svg>
    </SpinBox>
    mm
  </OffsetLabel>
);

const CheckLabel = styled.label`
  display: flex;
  align-items: center;
  gap: 8px;

  input {
    width: 12px;
    height: 12px;
    margin: 0;
    border: 1px solid #999;
    background: #fff;
    appearance: none;
  }

  input:checked {
    background: #0078d7;
  }
`;

const ComponentTools = () => (
  <Band $columns="565px 157px 1fr" $indent={2}>
    <Group>
      <GripDots />
      <Combo label="楼层" value="基础层" />
      <Combo label="构件类型" value="自定义" wide />
      <Combo label="构件" value="自定义线" wide />
      <Combo label="构件名称" value="ZDYX-17" wide />
      <Separator />
      <Tool icon="props" label="属性" />
      <Tool icon="editBar" label="编辑钢筋" />
      <Tool icon="list" label="构件列表" />
      <Tool icon="picker" label="拾取构件" />
    </Group>
    <Group>
      <GripDots />
      <Tool icon="twoPoint" label="两点" />
      <Tool icon="parallel" label="平行" />
      <Overflow />
    </Group>
    <Group>
      <GripDots />
      <Combo label="偏移方式" value="不偏移" />
      <Separator />
      <Offset axis="X" />
      <Offset axis="Y" />
      <Separator />
      <CheckLabel>
        <input type="checkbox" />
        旋转
      </CheckLabel>
      <Overflow />
    </Group>
  </Band>
);

const EmptyBand = styled(Band)`
  padding-left: 413px;
`;

const EmptyGroup = styled(Group)`
  width: 31px;
`;

const DrawTools = () => (
  <Band $indent={2}>
    <Group $fit>
      <GripDots />
      <Tool icon="pointer" label="选择" split />
      <Separator />
      <Tool icon="line" label="直线" />
      <Tool icon="pointLen" label="点加长度" />
      <Tool icon="arc" label="三点画弧" split />
      <Combo label="画弧方式" value="" />
      <Tool icon="rect" label="矩形" />
      <Separator />
      <Tool icon="smart" label="智能布置" caret />
    </Group>
  </Band>
);

const SnapTools = () => (
  <Band $tall $columns="209px auto 1fr" $indent={2}>
    <Group>
      <GripDots />
      <Tool icon="ortho" label="正交" />
      <Tool icon="snap" label="对象捕捉" $active />
      <Tool icon="dynInput" label="动态输入" $active />
    </Group>
    <Group>
      <GripDots />
      <Tool icon="cross" label="交点" />
      <Tool icon="perp" label="垂点" $active />
      <Tool icon="mid" label="中点" $active />
      <Tool icon="vertex" label="顶点" />
      <Tool icon="coord" label="坐标" />
    </Group>
  </Band>
);

// ---------- sidebar ----------

const Main = styled.main`
  display: flex;
  flex: 1;
  min-height: 0;
  gap: 5px;
`;

const Sidebar = styled.aside`
  display: flex;
  flex-direction: column;
  width: 238px;
  margin: 2px 0 2px;
  flex: none;
`;

const SidebarTitle = styled.div`
  display: flex;
  align-items: center;
  height: 16px;
  margin-bottom: 1px;
  background: #0054e3;
  color: #fff;
  font-size: 13px;

  button {
    display: flex;
    padding: 0 1px;
    border: none;
    background: none;
  }

  span {
    flex: 1;
  }
`;

const PanelButton = styled.button`
  height: 22px;
  padding: 0;
  border: 1px solid #a0a0a0;
  border-bottom: ${(props) => (props.$last ? "1px solid #a0a0a0" : "none")};
  background: #f0f0f0;
  box-shadow: inset 1px 1px #fff;
  flex: none;
`;

const TreePanel = styled.div`
  display: flex;
  flex-direction: column;
  flex: 1;
  min-height: 0;
  padding-left: 1px;
  border: 1px solid #a0a0a0;
  border-bottom: none;
`;

const TreeTools = styled.div`
  display: flex;
  align-items: center;
  gap: 7px;
  height: 26px;
  padding: 0 4px;
  background: linear-gradient(#fcfcfc, #ededed);
  flex: none;

  button {
    display: flex;
    padding: 0;
    border: none;
    background: none;
  }
`;

const TreeList = styled.ul`
  flex: 1;
  margin: 0;
  padding: 1px 0 0;
  border: 1px solid #828790;
  background: #fff;
  list-style: none;

  ul {
    margin: 0;
    padding: 0;
    list-style: none;
  }
`;

const TreeRow = styled.div`
  display: flex;
  align-items: center;
  height: 16px;
  padding-left: ${(props) => (props.$child ? 12 : 5)}px;
  white-space: nowrap;
`;

const Toggle = styled.button`
  display: flex;
  width: 18px;
  padding: 0;
  border: none;
  background: none;
`;

const Guide = styled.span`
  width: 19px;
  height: 16px;
  border-left: 1px dotted #808080;
`;

const Branch = styled.span`
  width: 11px;
  height: 16px;
  background: repeating-linear-gradient(90deg, #808080 0 1px, transparent 1px 2px) 0
      8px / 11px 1px no-repeat,
    repeating-linear-gradient(#808080 0 1px, transparent 1px 2px) 0 0 / 1px
      ${(props) => (props.$last ? 8 : 16)}px no-repeat;
`;

const NodeLabel = styled.span`
  display: flex;
  align-items: center;
  gap: 5px;
  height: 16px;
  padding-right: ${(props) => (props.$top ? 6 : 0)}px;
  background: ${(props) => (props.$selected ? "#d9d9d9" : "none")};
`;

const Half = styled.span`
  font-family: "DejaVu Sans Mono", monospace;
  font-size: 10px;
`;

const NewTag = styled.b`
  align-self: flex-start;
  height: 12px;
  margin-left: 2px;
  background: linear-gradient(170deg, transparent 2px, #ffd91c 2px 11px, transparent 11px);
  font-family: "DejaVu Sans", sans-serif;
  font-size: 8px;
  line-height: 11px;
`;

// half-width characters are set in the fixed pitch face
const Song = ({ children }) => (
  <span>
    {children
      .split(/([\x20-\x7e]+)/)
      .map((part, i) => (i % 2 ? <Half key={i}>{part}</Half> : part))}
  </span>
);

const tree = [
  {
    name: "常用构件类型",
    children: [
      { name: "轴网(J)", icon: "grid" },
      { name: "筏板基础(M)", icon: "raft" },
      { name: "框柱(Z)", icon: "column" },
      { name: "剪力墙(Q)", icon: "wall" },
      { name: "梁(L)", icon: "beam" },
      { name: "现浇板(B)", icon: "slab" },
    ],
  },
  { name: "轴线" },
  { name: "柱" },
  { name: "墙" },
  { name: "门窗洞" },
  {
    name: "梁",
    children: [
      { name: "梁(L)", icon: "beam" },
      { name: "圈梁(E)", icon: "ring" },
    ],
  },
  { name: "板" },
  { name: "基础" },
  { name: "其它" },
  {
    name: "自定义",
    children: [
      { name: "自定义点", icon: "customPoint" },
      { name: "自定义线(X)", icon: "customLine", isNew: true },
      { name: "自定义面", icon: "customFace" },
      { name: "尺寸标注(W)", icon: "dimension" },
    ],
  },
  { name: "CAD识别", isNew: true },
];

const NewMark = () => (
  <>
    <Icon name="book" />
    <NewTag>NEW</NewTag>
  </>
);

const TreeGroup = ({ node, selected, onSelect }) => {
  const [open, setOpen] = useState(Boolean(node.children));

  return (
    <li>
      <TreeRow>
        <Toggle type="button" aria-label={node.name} onClick={() => setOpen(!open)}>
          <svg width="12" height="12" viewBox="0 0 12 12" fill="none">
            {open ? (
              <path d="M2 4l4 4 4-4" stroke="#404040" strokeWidth="1.6" />
            ) : (
              <path d="M4 2l4 4-4 4" stroke="#a0a0a0" strokeWidth="1.6" />
            )}
          </svg>
        </Toggle>
        <NodeLabel $top>
          <Icon name={open ? "folderOpen" : "folder"} size={15} />
          <Song>{node.name}</Song>
        </NodeLabel>
        {node.isNew && <NewMark />}
      </TreeRow>
      {open && node.children && (
        <ul>
          {node.children.map((child, i) => (
            <li key={child.name} onClick={() => onSelect(child.name)}>
              <TreeRow $child>
                <Guide />
                <Branch $last={i === node.children.length - 1} />
                <NodeLabel $selected={selected === child.name}>
                  <Icon name={child.icon} size={15} />
                  <Song>{child.name}</Song>
                </NodeLabel>
                {child.isNew && <NewMark />}
              </TreeRow>
            </li>
          ))}
        </ul>
      )}
    </li>
  );
};

const Navigator = () => {
  const [selected, setSelected] = useState("自定义线(X)");

  return (
    <Sidebar>
      <SidebarTitle>
        <span>模块导航栏</span>
        <button type="button" aria-label="固定">
          <Icon name="pin" />
        </button>
        <button type="button" aria-label="关闭">
          <Svg>
            <path d="M4.5 4.5l7 7M11.5 4.5l-7 7" stroke="#fff" />
          </Svg>
        </button>
      </SidebarTitle>
      <PanelButton type="button">工程设置</PanelButton>
      <PanelButton type="button">绘图输入</PanelButton>
      <TreePanel>
        <TreeTools>
          <button type="button" aria-label="展开">
            <Svg>
              <path
                d="M0 5.5h9M4.5 1v9M7 11.5h9M11.5 7v9"
                stroke="#0a2626"
                strokeWidth="3"
              />
              <path d="M1 5.5h7M4.5 2v7M8 11.5h7M11.5 8v7" stroke="#1aa3a3" />
            </Svg>
          </button>
          <button type="button" aria-label="折叠">
            <Svg>
              <path d="M0 5.5h9M7 11.5h9" stroke="#0a2626" strokeWidth="3" />
              <path d="M1 5.5h7M8 11.5h7" stroke="#1aa3a3" />
            </Svg>
          </button>
        </TreeTools>
        <TreeList>
          {tree.map((node) => (
            <TreeGroup
              key={node.name}
              node={node}
              selected={selected}
              onSelect={setSelected}
            />
          ))}
        </TreeList>
      </TreePanel>
      <PanelButton type="button">单构件输入</PanelButton>
      <PanelButton type="button" $last>
        报表预览
      </PanelButton>
    </Sidebar>
  );
};

// ---------- 3d view ----------

const Workspace = styled.section`
  display: flex;
  flex-direction: column;
  flex: 1;
  min-width: 0;
`;

const View = styled.svg`
  display: block;
  flex: 1;
  min-height: 0;
  width: calc(100% - 1px);
  background: #000;
  font-family: "Liberation Sans", sans-serif;
`;

const Scene = () => (
  <View viewBox="243 194 1122 483" preserveAspectRatio="xMinYMin slice" fill="none">
    <g stroke="#800000" shapeRendering="crispEdges">
      <path d="M243 237L384 194M243 334L699 194M393 194L599 677M243 623L850 438M243 561L293 677M638 677L916 592" />
    </g>
    <g stroke="#ff0000" shapeRendering="crispEdges">
      <path d="M746 194L924 610M924 609L701 677" />
    </g>
    <g stroke="#008000" shapeRendering="crispEdges">
      <path d="M924 610L953 677" />
      <circle cx="744" cy="664" r="12.5" />
      <circle cx="947" cy="664" r="12.5" />
    </g>
    <g shapeRendering="crispEdges">
      <path d="M389 450L971.5 272L964 362L381 539.5z" fill="#00b300" />
      <path d="M360 389L942 211L971.5 280L389 458z" fill="#00e600" />
      <path d="M360 389L389 458L381 539.5L352 472z" fill="#009900" />
      <path d="M383 428L965.5 249.5L973 266L390 444.5z" fill="#e6e6e6" />
      <path d="M390 444L973 266L971.5 277L389 455z" fill="#b3b3b3" />
      <path d="M383 428L390 444.5L389 455L382 438z" fill="#999" />
    </g>
    <g stroke="#fff" strokeOpacity="0.5">
      <circle cx="804" cy="435.5" r="214.5" />
      <circle cx="804" cy="221" r="13.5" />
      <circle cx="804" cy="650" r="13.5" />
      <circle cx="589.5" cy="435.5" r="13.5" />
      <circle cx="1018.5" cy="435.5" r="13.5" />
    </g>
    <g fontSize="13" fill="#e0e0e0" stroke="#e0e0e0" strokeWidth=".4" textAnchor="middle">
      <text x="744" y="668">
        A
      </text>
      <text x="947" y="668">
        4
      </text>
    </g>
    <path d="M298 627L333 617" stroke="#f00" strokeWidth="4" />
    <path d="M344 613L331 611L335 621z" fill="#f00" />
    <path d="M298 627L285 596" stroke="#0f0" strokeWidth="4" />
    <path d="M280 586L280 598L288 595z" fill="#0f0" />
    <path d="M298 627L300 610" stroke="#0080ff" strokeWidth="4" />
    <path d="M300 602L295 611H304z" fill="#0080ff" />
    <g fontSize="13" textAnchor="middle">
      <text x="296" y="594" fill="#0f0">
        Y
      </text>
      <text x="331" y="607" fill="#f00">
        X
      </text>
      <text x="292" y="609" fill="#0080ff">
        Z
      </text>
    </g>
  </View>
);

// ---------- status bar and taskbar ----------

const StatusBar = styled.footer`
  display: grid;
  grid-template-columns: 148px 78px 98px 48px 1fr 70px;
  gap: 2px;
  height: 22px;
  padding: 2px 0 1px;
  background: #f8f8f8;
  flex: none;
`;

const StatusCell = styled.div`
  padding: 0 1px;
  border: solid #d7d7d7;
  border-width: 1px 1px 1px 0;
  background: linear-gradient(#fcfcfc, #f0f0f0);
  white-space: nowrap;
`;

const Taskbar = styled.div`
  display: flex;
  height: 40px;
  background: #000b0f;
  color: #fff;
  flex: none;
`;

const StartButton = styled.button`
  width: 48px;
  padding: 4px 0 0;
  border: none;
  background: #000;
`;

const Search = styled.label`
  display: flex;
  align-items: center;
  gap: 6px;
  width: 344px;
  padding: 0 12px 0 8px;
  background: #333;

  input {
    flex: 1;
    min-width: 0;
    padding: 0;
    border: none;
    background: none;
    font-size: 14px;
    outline: none;
  }

  input::placeholder {
    color: #989898;
    opacity: 1;
  }
`;

const Apps = styled.div`
  display: flex;
  gap: 2px;
  padding-left: 1px;
`;

const AppButton = styled.button`
  display: flex;
  align-items: center;
  justify-content: center;
  width: 48px;
  padding: 0;
  border: none;
  background: ${(props) =>
    props.$running
      ? `linear-gradient(#76b9ed, #76b9ed) bottom / ${
          props.$current ? "100%" : "40px"
        } 2px no-repeat`
      : "none"};
  background-color: ${(props) => (props.$current ? "#33393c" : "transparent")};
`;

const Tray = styled.div`
  display: flex;
  align-items: center;
  gap: 9px;
  margin-left: auto;
`;

const Clock = styled.time`
  margin-left: 16px;
  line-height: 19px;
  text-align: center;
`;

const ShowDesktop = styled.button`
  width: 5px;
  height: 40px;
  padding: 0;
  border: none;
  border-left: 1px solid #555;
  background: none;
`;

const apps = [
  {
    name: "风车",
    art: (
      <path
        d="M11.5 11.5C9 12 2 13 1 7c0-5 6-7 8-4 3 3 2 6 2.5 8.5zM12.5 11.5C12 9 11 2 17 1c5 0 7 6 4 8-3 3-6 2-8.5 2.5zM12.5 12.5C15 12 22 11 23 17c0 5-6 7-8 4-3-3-2-6-2.5-8.5zM11.5 12.5C12 15 13 22 7 23c-5 0-7-6-4-8 3-3 6-2 8.5-2.5z"
        fill="#e8e8e8"
      />
    ),
  },
  {
    name: "旋风",
    art: (
      <path
        d="M21 4c-5-1-5 1-9 0-6 0-10 5-9 10 2 7 12 9 16 2 2-5-1-9-6-9-5 1-7 6-4 9 3 2 7 0 6-3-1-2-4-2-4 0"
        fill="none"
        stroke="#ddd"
        strokeWidth="1.5"
      />
    ),
  },
  {
    name: "Edge",
    art: (
      <path
        d="M2 11C3 4 8 1 13 1c6 0 9 5 9 9v3H9c0 5 7 6 12 3v5C13 25 4 22 4 14c0-4 3-6 5-7-3 0-6 2-7 4zm7-2h7c0-5-7-5-7 0z"
        fill="#0a7ad8"
        fillRule="evenodd"
      />
    ),
  },
  {
    name: "应用商店",
    art: (
      <>
        <path d="M2 6l20-1v18L2 21z" fill="#fff" />
        <path d="M8 6c0-5 7-6 8 0" stroke="#fff" strokeWidth="1.5" fill="none" />
        <path
          d="M6 10l5-.5V14H6zM12 9.5l6-.5v5h-6zM6 15h5v4l-5-.5zM12 15h6v5l-6-.5z"
          fill="#000b0f"
        />
      </>
    ),
  },
  {
    name: "文件资源管理器",
    art: (
      <>
        <path d="M1 3h8l2 2h12v16H1z" fill="#ffe08a" />
        <path d="M1 3h8l2 3H1z" fill="#f2b632" />
        <path d="M5 22v-9h14v9h-4v-5H9v5z" fill="#2ba4dd" />
      </>
    ),
  },
  {
    name: "旋风浏览器",
    running: true,
    art: (
      <path
        d="M23 2c-5 1-6-1-11-1C4 1 0 7 1 13c1 8 9 12 16 9 6-3 7-12 1-14-4-1-7 2-6 5 1 2 3 2 4 1 0 4-7 5-9 0-1-6 5-10 11-8 3 0 5-2 5-4z"
        fill="#1ba2f2"
      />
    ),
  },
  {
    name: "绿色浏览器",
    running: true,
    art: (
      <>
        <circle cx="12" cy="12" r="10" fill="#54b92e" stroke="#e6f5df" strokeWidth="1.5" />
        <path d="M7 11c1-6 9-6 10 0zM7 14h11c-2 5-9 5-11 0z" fill="#fff" />
        <path d="M4 22C3 14 12 2 22 2" stroke="#2d7f18" fill="none" />
      </>
    ),
  },
];

const Desktop = () => (
  <Taskbar>
    <StartButton type="button" aria-label="开始">
      <svg width="16" height="16" viewBox="0 0 16 16" fill="#fff">
        <path d="M0 2l6.5-1v6.5H0zM7.5 1L16 0v7.5H7.5zM0 8.5h6.5V15L0 14zM7.5 8.5H16V16l-8.5-1z" />
      </svg>
    </StartButton>
    <Search>
      <svg width="22" height="22" viewBox="0 0 22 22" fill="none">
        <circle cx="11" cy="11" r="9" stroke="#f4f4f4" strokeWidth="3" />
      </svg>
      <input placeholder="在这里输入你要搜索的内容" aria-label="搜索" />
      <svg width="16" height="18" viewBox="0 0 16 18" fill="none" stroke="#aaa">
        <path d="M5.5 1.5h5v10h-5zM2.5 8v5.5h11V8M8 14v3M5 16.5h6" />
      </svg>
    </Search>
    <Apps>
      {apps.map((app) => (
        <AppButton
          type="button"
          key={app.name}
          aria-label={app.name}
          $running={app.running}
        >
          <svg width="24" height="24" viewBox="0 0 24 24">
            {app.art}
          </svg>
        </AppButton>
      ))}
      <AppButton type="button" aria-label="GGJ2013" $running $current>
        <Logo size={24} />
      </AppButton>
    </Apps>
    <Tray>
      <svg width="12" height="8" viewBox="0 0 12 8" fill="none">
        <path d="M1 7l5-5 5 5" stroke="#fff" strokeWidth="1.3" />
      </svg>
      <svg width="16" height="12" viewBox="0 0 16 12" fill="none" stroke="#fff">
        <path d="M5.5 4.5h9v6h-9zM15.5 6v3M1.5 1v2M4.5 1v2M.5 3.5h5v2h-4zM3 6v4h2" />
        <path d="M7 6h6v3H7z" fill="#fff" />
      </svg>
      <svg width="14" height="14" viewBox="0 0 14 14" fill="none" stroke="#ccc">
        <path d="M1 11C1 6 6 1 13 1M4 12c0-4 4-8 9-8M7 12.5C7 10 10 7 13 7" />
        <circle cx="12" cy="12" r="1.5" fill="#fff" stroke="none" />
      </svg>
      <svg width="16" height="14" viewBox="0 0 16 14" fill="none" stroke="#fff">
        <path d="M.5 4.5h3l4-3.5v12l-4-3.5h-3zM9.5 5v4M11.5 3.5v7" />
        <path d="M14 2q2 5 0 10" stroke="#888" />
      </svg>
      <svg width="14" height="14" viewBox="0 0 14 14" fill="none">
        <path d="M2 13L6.5 1.5h1L12 13M4 9h6" stroke="#fff" strokeWidth="2" />
      </svg>
      <SogouLogo size={16} />
      <Clock>
        20:42
        <br />
        2017/7/5
      </Clock>
      <svg width="40" height="18" viewBox="0 0 40 18" fill="none">
        <path d="M14.5 2.5h15v11h-5l-2.5 3-2.5-3h-5z" stroke="#fff" />
      </svg>
      <ShowDesktop type="button" aria-label="显示桌面" />
    </Tray>
  </Taskbar>
);

const App = () => (
  <Window>
    <GlobalStyle />
    <TitleBar>
      <Logo size={16} />
      <h1>
        {
          "广联达BIM钢筋算量软件 GGJ2013 - [C:\\Users\\Administrator.PC-20141127NRHM\\Desktop\\白龙村-2016-08-25-13-27-07(2166版).GGJ12]"
        }
      </h1>
      <WindowButtons>
        <button type="button" aria-label="最小化">
          <svg width="10" height="10" stroke="#000" fill="none">
            <path d="M0 5.5h10" />
          </svg>
        </button>
        <button type="button" aria-label="还原">
          <svg width="10" height="10" stroke="#000" fill="none">
            <path d="M.5 2.5h7v7h-7zM2.5 2.5v-2h7v7h-2" />
          </svg>
        </button>
        <button type="button" aria-label="关闭">
          <svg width="10" height="10" stroke="#000" fill="none">
            <path d="M0 0l10 10M10 0L0 10" />
          </svg>
        </button>
      </WindowButtons>
    </TitleBar>
    <Menu />
    <MainTools />
    <Main>
      <Navigator />
      <Workspace>
        <EditTools />
        <ComponentTools />
        <EmptyBand>
          <EmptyGroup $fit>
            <GripDots />
          </EmptyGroup>
        </EmptyBand>
        <DrawTools />
        <Scene />
        <SnapTools />
      </Workspace>
    </Main>
    <StatusBar>
      <StatusCell>
        <Song>X=41067 Y=3721</Song>
      </StatusCell>
      <StatusCell>
        <Song>层高:3.55m</Song>
      </StatusCell>
      <StatusCell>
        <Song>底标高:-3.58m</Song>
      </StatusCell>
      <StatusCell>
        <Song>0</Song>
      </StatusCell>
      <StatusCell />
      <StatusCell>
        <Song>920.5 FPS</Song>
      </StatusCell>
    </StatusBar>
    <Desktop />
    <Ime />
    <SpeedBall>68</SpeedBall>
  </Window>
);

export default App;
